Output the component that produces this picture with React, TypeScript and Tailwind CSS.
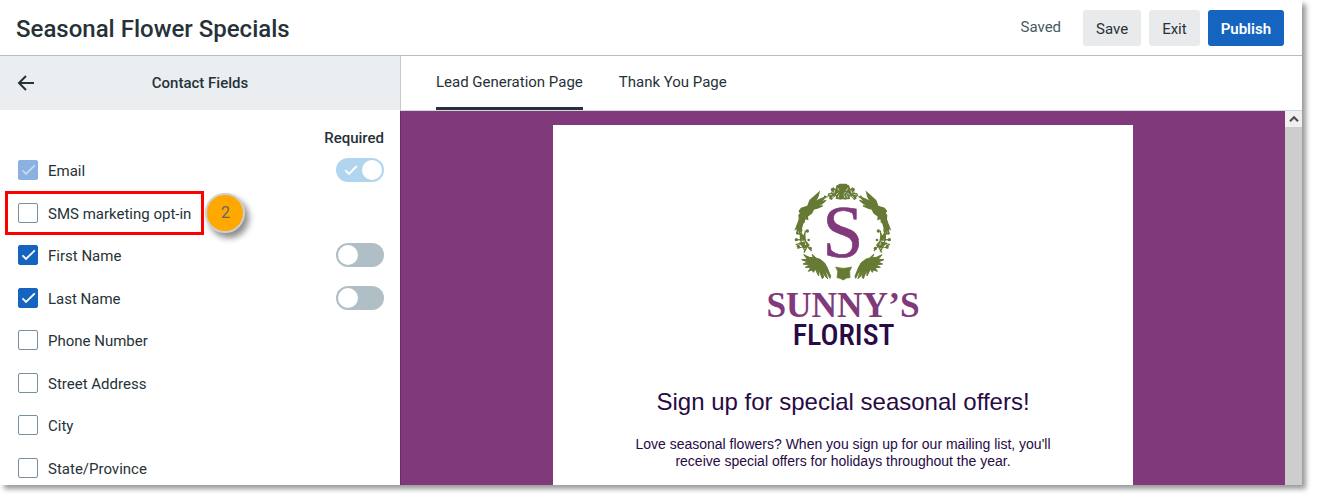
import { useState } from "react";
import clsx from "clsx";

type Field = {
  id: string;
  label: string;
  checked?: boolean;
  disabled?: boolean;
  required?: boolean;
  highlight?: boolean;
};

const FIELDS: Field[] = [
  { id: "email", label: "Email", checked: true, disabled: true, required: true },
  { id: "sms", label: "SMS marketing opt-in", highlight: true },
  { id: "first-name", label: "First Name", checked: true, required: false },
  { id: "last-name", label: "Last Name", checked: true, required: false },
  { id: "phone", label: "Phone Number" },
  { id: "street", label: "Street Address" },
  { id: "city", label: "City" },
  { id: "state", label: "State/Province" },
];

const TABS = ["Lead Generation Page", "Thank You Page"];

function Checkbox({ id, checked, disabled }: { id: string; checked?: boolean; disabled?: boolean }) {
  return (
    <span className="grid size-5 shrink-0">
      <input
        id={id}
        type="checkbox"
        defaultChecked={checked}
        disabled={disabled}
        className="peer col-start-1 row-start-1 size-5 appearance-none rounded-xs border border-[#78909c] bg-white checked:border-[#1565c0] checked:bg-[#1565c0] checked:disabled:border-[#8ab1e0] checked:disabled:bg-[#8ab1e0]"
      />
      <svg
        viewBox="0 0 20 20"
        className="pointer-events-none col-start-1 row-start-1 size-5 text-white opacity-0 peer-checked:opacity-100 peer-disabled:text-[#c4d8ef]"
      >
        <path d="M4.5 10.4 8 14l8.8-8.7" fill="none" stroke="currentColor" strokeWidth="1.8" />
      </svg>
    </span>
  );
}

function Toggle({ label, on, disabled }: { label: string; on: boolean; disabled?: boolean }) {
  return (
    <label className="grid h-6 w-12 items-center">
      <input
        type="checkbox"
        role="switch"
        aria-label={`${label} required`}
        defaultChecked={on}
        disabled={disabled}
        className="peer col-start-1 row-start-1 h-6 w-12 appearance-none rounded-full bg-[#b0bec5] checked:bg-[#1565c0] checked:disabled:bg-[#b0d6ef]"
      />
      <svg
        viewBox="0 0 14 12"
        className="pointer-events-none col-start-1 row-start-1 ml-2 h-3 w-3.5 opacity-0 peer-checked:opacity-100"
      >
        <path d="M1.2 6.2 5 10 12.8 2" fill="none" stroke="#fff" strokeWidth="1.8" />
      </svg>
      <span className="pointer-events-none col-start-1 row-start-1 ml-0.5 size-5 rounded-full bg-white peer-checked:ml-[26px]" />
    </label>
  );
}

function FieldRow({ field }: { field: Field }) {
  const { id, label, checked, disabled, required, highlight } = field;

  return (
    <li className="flex items-center justify-between">
      <div className="relative flex h-full items-center gap-2.5">
        <Checkbox id={id} checked={checked} disabled={disabled} />
        <label htmlFor={id} className="pt-0.5">
          {label}
        </label>
        {highlight && (
          <>
            <span className="pointer-events-none absolute -inset-x-[13px] -inset-y-px border-3 border-[#fe0000]" />
            <span className="absolute left-full ml-3.5 flex size-10 items-center justify-center rounded-full border-2 border-[#cfcfcf] bg-[#ffa800] text-base text-[#666] shadow-[4px_5px_6px_rgba(0,0,0,0.45)]">
              2
            </span>
          </>
        )}
      </div>
      {required !== undefined && <Toggle label={label} on={required} disabled={disabled} />}
    </li>
  );
}

// one side of the wreath, mirrored for the other
function WreathHalf() {
  return (
    <g fill="#667a33">
      <path
        d="M207 67l-3 12-9 18 14-9 17-7-8 9-15 10 25-9-13 11-17 5 20 1-18 7-9 2-6 12-13 10 1 9-9-3-1 10-5 6-5 19-5 9-1-10-6 7 2-13-6 4 6-15 5-14-1-13 5-4-4-8 6-8 9-3 10-3 7-18z"
        stroke="#667a33"
        strokeWidth="4"
      />
      <path d="M218 86l6-10 8 4 3-10 9-2-2-12 9-4 5 6 4-12 9-4 20-1v48l-10-1-6-9-5 9-11-1 1-10-8 6-5 7-8-4 2-6z" />
      <g fill="none" stroke="#fff" strokeWidth="2">
        <path d="M229 86l7-8M242 62l8 7M254 60l-2 10M263 54l6 9M264 83l4-10M246 84l5-7M237 75l9-2M258 74l7-5M270 66l6 7M272 84l3-8" />
      </g>
      <g fill="none" stroke="#667a33" strokeWidth="4">
        <path d="M156 178c-9 22-6 43 10 66M166 182c-5 22-1 42 19 61M144 190l18 8M139 209l23 1M137 224l27-8M142 235l30-10M152 187l12 20M165 190l-8 17M146 219l23 16M158 203l20 24M174 224l-12 24" />
      </g>
      <circle cx="142" cy="190" r="4" />
      <circle cx="139" cy="209" r="5" />
      <circle cx="145" cy="229" r="5" />
      <circle cx="172" cy="183" r="5" />
      <circle cx="176" cy="210" r="4" />
      <circle cx="155" cy="201" r="6" />
      <circle cx="160" cy="222" r="6" />
      <circle cx="181" cy="235" r="5" />
      <path
        d="M161 254l17 8 12 1-4-10 12 11 12 4 14 11 8 15 10 25-2 6-8-15-8-10 5 13 4 13-9-9-9-17 6 21-4 5-7-18-3-8-1 18-7-14-2-7-7 10-3-7-12 4 7-11-16-1 13-7-20-3 14-6-18-7 17-1z"
        stroke="#667a33"
        strokeWidth="3"
      />
    </g>
  );
}

function Logo() {
  return (
    <svg viewBox="24 30 510 540" className="h-[180px] w-[170px]" role="img" aria-label="Sunny's Florist">
      <WreathHalf />
      <g transform="matrix(-1 0 0 1 557 0)">
        <WreathHalf />
      </g>
      <path d="M257 291q22 8 48 0l-6 13 1 19-10 1-10 6-11-5-8-2 2-19z" fill="#667a33" stroke="#667a33" strokeWidth="2" />
      <g textAnchor="middle" fontFamily="Liberation Serif, serif" fill="#80397b">
        <text x="279" y="261" fontSize="220" stroke="#80397b" strokeWidth="2">
          S
        </text>
        <text x="279" y="440" fontSize="106" fontWeight="700">
          SUNNY’S
        </text>
      </g>
      <text
        x="281"
        y="524"
        textAnchor="middle"
        fontFamily="Roboto Condensed, Roboto, sans-serif"
        fontSize="90"
        fontWeight="500"
        fill="#280a45"
      >
        FLORIST
      </text>
    </svg>
  );
}

export default function App() {
  const [tab, setTab] = useState(TABS[0]);

  return (
    <div className="h-screen bg-white pr-[15px] pb-[15px] font-[Roboto,sans-serif] text-[15px] leading-5 text-[#263238]">
      <div className="flex h-full flex-col bg-white shadow-[4px_4px_5px_rgba(0,0,0,0.4)]">
        <header className="flex h-14 shrink-0 items-center justify-between border-b border-[#b0bec5] pr-[18px] pl-4">
          <h1 className="pt-0.5 text-2xl font-medium">Seasonal Flower Specials</h1>
          <div className="flex items-center gap-2">
            <span className="mr-3.5 pb-0.5 text-[#455a64]">Saved</span>
            <button className="h-9 rounded-[3px] bg-[#e9eaeb] px-[13px] pt-0.5">Save</button>
            <button className="h-9 rounded-[3px] bg-[#e9eaeb] px-[13px] pt-0.5">Exit</button>
            <button className="h-9 rounded-[3px] bg-[#1565c0] px-[13px] pt-0.5 font-semibold text-white">
              Publish
            </button>
          </div>
        </header>

        <div className="flex min-h-0 flex-1">
          <aside className="flex w-[400px] shrink-0 flex-col overflow-hidden">
            <div className="grid h-[54px] shrink-0 grid-cols-[1fr_auto_1fr] items-center bg-[#eaeef1] px-4">
              <button aria-label="Back" className="size-5">
                <svg viewBox="0 0 20 20" className="size-5" fill="none" stroke="#263238" strokeWidth="2">
                  <path d="M18 10H3M10 3l-7 7 7 7" />
                </svg>
              </button>
              <h2 className="font-medium">Contact Fields</h2>
            </div>
            <p className="pt-[18px] pr-4 text-right font-medium">Required</p>
            <ul className="mt-px grid h-[340px] shrink-0 grid-rows-8 pr-4 pl-[18px]">
              {FIELDS.map((f) => (
                <FieldRow key={f.id} field={f} />
              ))}
            </ul>
          </aside>

          <main className="flex min-w-0 flex-1 flex-col">
            <nav className="flex h-[55px] shrink-0 gap-9 border-b border-l border-b-[#cfd8dc] border-l-[#c5c9cc] pl-[35px]">
              {TABS.map((t) => (
                <button
                  key={t}
                  onClick={() => setTab(t)}
                  className={clsx("border-b-3", t === tab ? "border-[#263238]" : "border-transparent")}
                >
                  {t}
                </button>
              ))}
            </nav>
            <div className="flex min-h-0 flex-1">
              <div className="flex min-w-0 flex-1 justify-center overflow-hidden border-l border-[#672e63] bg-[#80397b] pt-3.5">
                <section className="flex w-[580px] flex-col items-center bg-white pt-[55px] text-center font-['Liberation_Sans',sans-serif] text-[#280a45]">
                  <Logo />
                  <h2 className="mt-[26px] text-2xl">Sign up for special seasonal offers!</h2>
                  <p className="mt-[18px] w-[440px] text-sm leading-[17px]">
                    Love seasonal flowers? When you sign up for our mailing list, you'll receive special offers for
                    holidays throughout the year.
                  </p>
                </section>
              </div>
              <div className="w-[17px] shrink-0 bg-[#cdcdcd]">
                <button aria-label="Scroll up" className="flex h-4 w-full items-center justify-center bg-[#f0f0f0]">
                  <svg viewBox="0 0 10 8" className="h-2 w-2.5">
                    <path d="M1 6.2 5 2.2l4 4" fill="none" stroke="#505050" strokeWidth="2.2" />
                  </svg>
                </button>
              </div>
            </div>
          </main>
        </div>
      </div>
    </div>
  );
}
